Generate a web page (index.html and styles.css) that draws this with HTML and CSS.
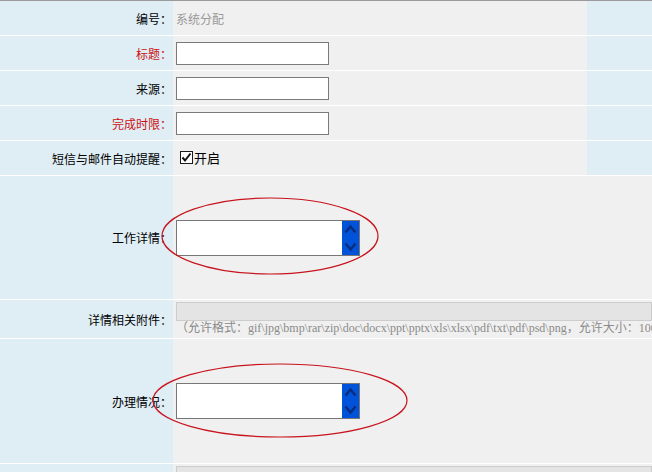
FILE: index.html
```html
<!DOCTYPE html>
<html lang="zh-CN">
<head>
  <meta charset="UTF-8" />
  <title>工作任务</title>
  <link rel="stylesheet" href="styles.css">
</head>
<body>
  <div class="form">
    <div class="row">
      <div class="label">编号：</div>
      <div class="field muted">系统分配</div>
      <div class="side"></div>
    </div>
    <div class="row">
      <div class="label req">标题：</div>
      <div class="field"><input type="text" class="text"></div>
      <div class="side"></div>
    </div>
    <div class="row">
      <div class="label">来源：</div>
      <div class="field"><input type="text" class="text"></div>
      <div class="side"></div>
    </div>
    <div class="row">
      <div class="label req">完成时限：</div>
      <div class="field"><input type="text" class="text"></div>
      <div class="side"></div>
    </div>
    <div class="row">
      <div class="label">短信与邮件自动提醒：</div>
      <div class="field">
        <label class="remind">
          <span class="check">
            <svg width="11" height="11" viewBox="0 0 11 11"><path d="M1.5 5.5 L4 8.5 L9.5 1.5" fill="none" stroke="#111" stroke-width="2"/></svg>
          </span>
          开启
        </label>
      </div>
      <div class="side"></div>
    </div>
    <div class="row tall">
      <div class="label">工作详情：</div>
      <div class="field">
        <div class="memo">
          <textarea></textarea>
          <div class="scroll">
            <svg width="17" height="34" viewBox="0 0 17 34"><path d="M3.5 11.5 L8.5 5.5 L13.5 11.5" fill="none" stroke="#0a2c7a" stroke-width="2.4"/><path d="M3.5 22.5 L8.5 28.5 L13.5 22.5" fill="none" stroke="#0a2c7a" stroke-width="2.4"/></svg>
          </div>
          <svg class="mark mark-a" width="218" height="78" viewBox="0 0 218 78"><ellipse cx="109" cy="39" rx="108" ry="38" fill="none" stroke="#c8141e" stroke-width="1.2"/></svg>
        </div>
      </div>
    </div>
    <div class="row attach">
      <div class="label">详情相关附件：</div>
      <div class="field">
        <div class="file"></div>
        <div class="note">（允许格式：gif\jpg\bmp\rar\zip\doc\docx\ppt\pptx\xls\xlsx\pdf\txt\pdf\psd\png，允许大小：100M）</div>
      </div>
    </div>
    <div class="row tall2">
      <div class="label">办理情况：</div>
      <div class="field">
        <div class="memo">
          <textarea></textarea>
          <div class="scroll">
            <svg width="17" height="34" viewBox="0 0 17 34"><path d="M3.5 11.5 L8.5 5.5 L13.5 11.5" fill="none" stroke="#0a2c7a" stroke-width="2.4"/><path d="M3.5 22.5 L8.5 28.5 L13.5 22.5" fill="none" stroke="#0a2c7a" stroke-width="2.4"/></svg>
          </div>
          <svg class="mark mark-b" width="256" height="75" viewBox="0 0 256 75"><ellipse cx="128" cy="37.5" rx="127" ry="36.5" fill="none" stroke="#c8141e" stroke-width="1.2"/></svg>
        </div>
      </div>
    </div>
    <div class="row last">
      <div class="label"></div>
      <div class="field"><div class="file"></div></div>
    </div>
  </div>
</body>
</html>
```

FILE: styles.css
```css
* {
  box-sizing: border-box;
}
body {
  margin: 0;
  font-family: "Noto Sans CJK SC", "DejaVu Sans", sans-serif;
  font-size: 12px;
  color: #000;
  background: #f0f0f0;
  overflow: hidden;
}
.form {
  width: 652px;
  border-top: 1px solid #9a9a9a;
}
.row {
  display: flex;
  height: 35px;
  border-bottom: 1px solid #fff;
}
.row.tall {
  height: 124px;
}
.row.attach {
  height: 39px;
}
.row.tall2 {
  height: 125px;
}
.row.last {
  height: 30px;
  border-bottom: none;
}
.label {
  width: 173px;
  flex-shrink: 0;
  background: #dfedf5;
  display: flex;
  align-items: center;
  justify-content: flex-end;
  padding-right: 1px;
  white-space: nowrap;
}
.label.req {
  color: #cc1111;
}
.field {
  flex: 1;
  min-width: 0;
  background: #f0f0f0;
  display: flex;
  align-items: center;
  padding-left: 3px;
  white-space: nowrap;
}
.field.muted {
  color: #999;
}
.side {
  width: 65px;
  flex-shrink: 0;
  background: #dfedf5;
}
.text {
  width: 153px;
  height: 23px;
  border: 1px solid #7a7a7a;
  background: #fff;
  padding: 0 2px;
  margin: 0;
  outline: none;
}
.remind {
  display: flex;
  align-items: center;
  font-size: 13px;
  margin-left: 4px;
  margin-top: -2px;
}
.check {
  width: 13px;
  height: 13px;
  border: 1px solid #1a1a1a;
  background: #fff;
  display: flex;
  align-items: center;
  justify-content: center;
  margin-right: 1px;
}
.memo {
  position: relative;
  display: flex;
  width: 184px;
  height: 36px;
  border: 1px solid #777;
  background: #fff;
}
.memo textarea {
  flex: 1;
  border: none;
  resize: none;
  outline: none;
  margin: 0;
  background: #fff;
}
.scroll {
  width: 17px;
  background: #0052d9;
}
.scroll svg {
  display: block;
}
.mark {
  position: absolute;
  pointer-events: none;
}
.mark-a {
  left: -16px;
  top: -24px;
}
.mark-b {
  left: -25px;
  top: -21px;
}
.attach .field {
  flex-direction: column;
  align-items: flex-start;
  justify-content: flex-start;
  padding-top: 2px;
}
.file {
  width: 476px;
  height: 19px;
  background: #e4e4e4;
  border: 1px solid #cdcdcd;
  flex-shrink: 0;
}
.note {
  font-family: "Liberation Serif", "Noto Sans CJK SC", serif;
  font-size: 12px;
  color: #8a8a8a;
  line-height: 15px;
}
.last .field {
  align-items: flex-start;
  padding-top: 2px;
}
```
